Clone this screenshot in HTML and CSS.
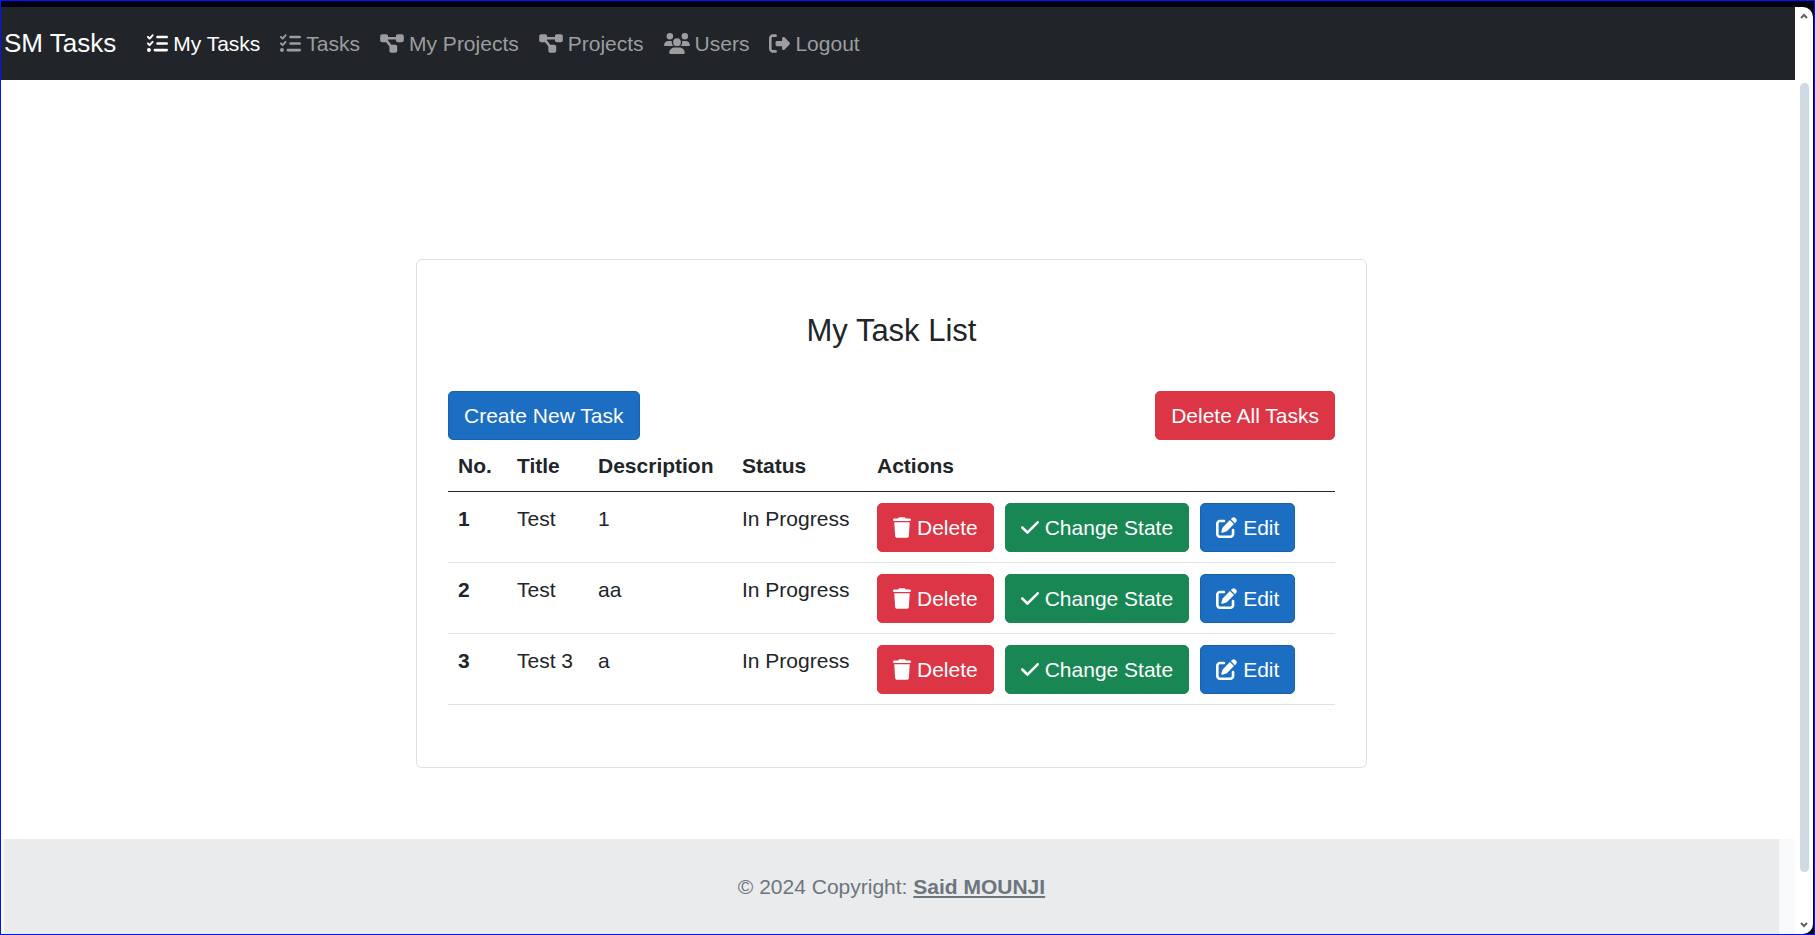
FILE: index.html
```html
<!DOCTYPE html>
<html lang="en">
<head>
<meta charset="utf-8">
<title>SM Tasks</title>
<link rel="stylesheet" href="styles.css">
</head>
<body>
<svg class="sprite" aria-hidden="true">
  <symbol id="list-check" viewBox="0 0 512 512"><path d="M152.1 38.2c9.9 8.9 10.7 24 1.8 33.9l-72 80c-4.4 4.9-10.6 7.8-17.2 7.9s-12.9-2.4-17.6-7L7 113C-2.3 103.6-2.3 88.4 7 79s24.6-9.4 33.9 0l22.1 22.1 55.1-61.2c8.9-9.9 24-10.7 33.9-1.8zm0 160c9.9 8.9 10.7 24 1.8 33.9l-72 80c-4.4 4.9-10.6 7.8-17.2 7.9s-12.9-2.4-17.6-7L7 273c-9.4-9.4-9.4-24.6 0-33.9s24.6-9.4 33.9 0l22.1 22.1 55.1-61.2c8.9-9.9 24-10.7 33.9-1.8zM224 96c0-17.7 14.3-32 32-32H480c17.7 0 32 14.3 32 32s-14.3 32-32 32H256c-17.7 0-32-14.3-32-32zm0 160c0-17.7 14.3-32 32-32H480c17.7 0 32 14.3 32 32s-14.3 32-32 32H256c-17.7 0-32-14.3-32-32zM160 416c0-17.7 14.3-32 32-32H480c17.7 0 32 14.3 32 32s-14.3 32-32 32H192c-17.7 0-32-14.3-32-32zM48 368a48 48 0 1 1 0 96 48 48 0 1 1 0-96z"/></symbol>
  <symbol id="diagram" viewBox="0 0 576 512"><path d="M0 80C0 53.5 21.5 32 48 32h96c26.5 0 48 21.5 48 48V96H384V80c0-26.5 21.5-48 48-48h96c26.5 0 48 21.5 48 48v96c0 26.5-21.5 48-48 48H432c-26.5 0-48-21.5-48-48V160H192v16c0 1.7-.1 3.4-.3 5L272 288h96c26.5 0 48 21.5 48 48v96c0 26.5-21.5 48-48 48H272c-26.5 0-48-21.5-48-48V336c0-1.7 .1-3.4 .3-5L144 224H48c-26.5 0-48-21.5-48-48V80z"/></symbol>
  <symbol id="users" viewBox="0 0 640 512"><path d="M144 0a80 80 0 1 1 0 160A80 80 0 1 1 144 0zM512 0a80 80 0 1 1 0 160A80 80 0 1 1 512 0zM0 298.7C0 239.8 47.8 192 106.7 192h42.7c15.9 0 31 3.5 44.6 9.7c-1.3 7.2-1.9 14.7-1.9 22.3c0 38.2 16.8 72.5 43.3 96c-.2 0-.4 0-.7 0H21.3C9.6 320 0 310.4 0 298.7zM405.3 320c-.2 0-.4 0-.7 0c26.6-23.5 43.3-57.8 43.3-96c0-7.6-.7-15-1.9-22.3c13.6-6.3 28.7-9.7 44.6-9.7h42.7C592.2 192 640 239.8 640 298.7c0 11.8-9.6 21.3-21.3 21.3H405.3zM224 224a96 96 0 1 1 192 0 96 96 0 1 1 -192 0zM128 485.3C128 411.7 187.7 352 261.3 352H378.7C452.3 352 512 411.7 512 485.3c0 14.7-11.9 26.7-26.7 26.7H154.7c-14.7 0-26.7-11.9-26.7-26.7z"/></symbol>
  <symbol id="logout" viewBox="0 0 512 512"><path d="M377.9 105.9L500.7 228.7c7.2 7.2 11.3 17.1 11.3 27.3s-4.1 20.1-11.3 27.3L377.9 406.1c-6.4 6.4-15 9.9-24 9.9c-18.7 0-33.9-15.2-33.9-33.9l0-62.1-128 0c-17.7 0-32-14.3-32-32l0-64c0-17.7 14.3-32 32-32l128 0 0-62.1c0-18.7 15.2-33.9 33.9-33.9c9 0 17.6 3.6 24 9.9zM160 96L96 96c-17.7 0-32 14.3-32 32l0 256c0 17.7 14.3 32 32 32l64 0c17.7 0 32 14.3 32 32s-14.3 32-32 32l-64 0c-53 0-96-43-96-96L0 128C0 75 43 32 96 32l64 0c17.7 0 32 14.3 32 32s-14.3 32-32 32z"/></symbol>
  <symbol id="trash" viewBox="0 0 448 512"><path d="M135.2 17.7L128 32H32C14.3 32 0 46.3 0 64S14.3 96 32 96H416c17.7 0 32-14.3 32-32s-14.3-32-32-32H320l-7.2-14.3C307.4 6.8 296.3 0 284.2 0H163.8c-12.1 0-23.2 6.8-28.6 17.7zM416 128H32L53.2 467c1.6 25.3 22.6 45 47.9 45H346.9c25.3 0 46.3-19.7 47.9-45L416 128z"/></symbol>
  <symbol id="check" viewBox="0 0 448 512"><path d="M438.6 105.4c12.5 12.5 12.5 32.8 0 45.3l-256 256c-12.5 12.5-32.8 12.5-45.3 0l-128-128c-12.5-12.5-12.5-32.8 0-45.3s32.8-12.5 45.3 0L160 338.7 393.4 105.4c12.5-12.5 32.8-12.5 45.3 0z"/></symbol>
  <symbol id="edit" viewBox="0 0 512 512"><path d="M471.6 21.7c-21.9-21.9-57.3-21.9-79.2 0L362.3 51.7l97.9 97.9 30.1-30.1c21.9-21.9 21.9-57.3 0-79.2L471.6 21.7zm-299.2 220c-6.1 6.1-10.8 13.6-13.5 21.9l-29.6 88.8c-2.9 8.6-.6 18.1 5.8 24.6s15.9 8.7 24.6 5.8l88.8-29.6c8.2-2.7 15.7-7.4 21.9-13.5L437.7 172.3 339.7 74.3 172.4 241.7zM96 64C43 64 0 107 0 160V416c0 53 43 96 96 96H352c53 0 96-43 96-96V320c0-17.7-14.3-32-32-32s-32 14.3-32 32v96c0 17.7-14.3 32-32 32H96c-17.7 0-32-14.3-32-32V160c0-17.7 14.3-32 32-32h96c17.7 0 32-14.3 32-32s-14.3-32-32-32H96z"/></symbol>
</svg>
<div class="window">
  <div class="page">
    <header class="navbar">
      <a class="brand" href="#">SM Tasks</a>
      <nav class="nav">
        <a class="nav-link active" href="#"><svg class="icon"><use href="#list-check"/></svg>My Tasks</a>
        <a class="nav-link" href="#"><svg class="icon"><use href="#list-check"/></svg>Tasks</a>
        <a class="nav-link" href="#"><svg class="icon icon-wide"><use href="#diagram"/></svg>My Projects</a>
        <a class="nav-link" href="#"><svg class="icon icon-wide"><use href="#diagram"/></svg>Projects</a>
        <a class="nav-link" href="#"><svg class="icon icon-wider"><use href="#users"/></svg>Users</a>
        <a class="nav-link" href="#"><svg class="icon"><use href="#logout"/></svg>Logout</a>
      </nav>
    </header>
    <main class="content">
      <section class="card">
        <h1 class="title">My Task List</h1>
        <div class="toolbar">
          <button class="btn primary" type="button">Create New Task</button>
          <button class="btn danger" type="button">Delete All Tasks</button>
        </div>
        <table class="tasks">
          <colgroup><col class="col-no"><col class="col-title"><col class="col-desc"><col class="col-status"><col></colgroup>
          <thead>
            <tr><th scope="col">No.</th><th scope="col">Title</th><th scope="col">Description</th><th scope="col">Status</th><th scope="col">Actions</th></tr>
          </thead>
          <tbody>
            <tr>
              <th scope="row">1</th><td>Test</td><td>1</td><td>In Progress</td>
              <td><div class="actions">
                <button class="btn danger" type="button"><svg class="icon icon-narrow"><use href="#trash"/></svg>Delete</button>
                <button class="btn success" type="button"><svg class="icon icon-narrow"><use href="#check"/></svg>Change State</button>
                <button class="btn primary" type="button"><svg class="icon"><use href="#edit"/></svg>Edit</button>
              </div></td>
            </tr>
            <tr>
              <th scope="row">2</th><td>Test</td><td>aa</td><td>In Progress</td>
              <td><div class="actions">
                <button class="btn danger" type="button"><svg class="icon icon-narrow"><use href="#trash"/></svg>Delete</button>
                <button class="btn success" type="button"><svg class="icon icon-narrow"><use href="#check"/></svg>Change State</button>
                <button class="btn primary" type="button"><svg class="icon"><use href="#edit"/></svg>Edit</button>
              </div></td>
            </tr>
            <tr>
              <th scope="row">3</th><td>Test 3</td><td>a</td><td>In Progress</td>
              <td><div class="actions">
                <button class="btn danger" type="button"><svg class="icon icon-narrow"><use href="#trash"/></svg>Delete</button>
                <button class="btn success" type="button"><svg class="icon icon-narrow"><use href="#check"/></svg>Change State</button>
                <button class="btn primary" type="button"><svg class="icon"><use href="#edit"/></svg>Edit</button>
              </div></td>
            </tr>
          </tbody>
        </table>
      </section>
    </main>
    <footer class="footer">
      <p class="copyright">© 2024 Copyright: <a class="author" href="#">Said MOUNJI</a></p>
    </footer>
  </div>
  <div class="scrollbar" aria-hidden="true">
    <svg class="arrow" viewBox="0 0 8 6"><path d="M1 5 4 2 7 5"/></svg>
    <div class="track"><div class="thumb"></div></div>
    <svg class="arrow" viewBox="0 0 8 6"><path d="M1 1 4 4 7 1"/></svg>
  </div>
</div>
</body>
</html>
```
FILE: styles.css
```css
* { box-sizing: border-box; }

body {
  margin: 0;
  font: 21px/31px "Liberation Sans", Arial, sans-serif;
  color: #212529;
  background: #fff;
}

.sprite { display: none; }

.window {
  display: flex;
  height: 100vh;
  overflow: hidden;
  border: 1px solid #0014ff;
  padding: 6px 1px 0 0;
  background: #00030f;
}

.page {
  flex: 1;
  min-width: 0;
  display: flex;
  flex-direction: column;
  overflow: hidden;
  background: #fff;
}

.navbar {
  display: flex;
  align-items: center;
  gap: 21px;
  flex: none;
  padding: 10px 3px;
  background: #212529;
}

.brand {
  padding: 11px 0;
  font-size: 26px;
  color: #fff;
  text-decoration: none;
}

.nav { display: flex; }

.nav-link {
  display: flex;
  align-items: center;
  gap: 5px;
  padding: 10px;
  color: #9b9d9f;
  text-decoration: none;
}

.nav-link.active { color: #fff; }

.icon {
  flex: none;
  width: 21px;
  height: 21px;
  fill: currentColor;
}

.icon-narrow { width: 18px; }
.icon-wide { width: 24px; }
.icon-wider { width: 26px; }

.content {
  flex: 1 0 auto;
  padding: 179px 16px 71px 3px;
}

.card {
  max-width: 951px;
  margin: 0 auto;
  padding: 52px 31px 62px;
  border: 1px solid #dee2e6;
  border-radius: 6px;
}

.title {
  margin: 0 0 42px;
  font-size: 31px;
  line-height: 37px;
  font-weight: 400;
  text-align: center;
}

.toolbar {
  display: flex;
  justify-content: space-between;
}

.btn {
  display: flex;
  align-items: center;
  gap: 6px;
  padding: 8px 15px;
  border: 1px solid;
  border-radius: 5px;
  font: inherit;
  color: #fff;
  white-space: nowrap;
}

.primary { background: #1b6ec2; border-color: #1861ac; }
.danger { background: #dc3545; border-color: #dc3545; }
.success { background: #198754; border-color: #198754; }

.tasks {
  width: 100%;
  table-layout: fixed;
  border-collapse: separate;
  border-spacing: 0;
}

.col-no { width: 59px; }
.col-title { width: 81px; }
.col-desc { width: 144px; }
.col-status { width: 135px; }

.tasks th,
.tasks td {
  padding: 11px 10px 10px;
  border-bottom: 1px solid #dee2e6;
  text-align: left;
  vertical-align: top;
  white-space: nowrap;
}

.tasks thead th {
  padding-top: 10px;
  border-bottom-color: #212529;
}

.actions {
  display: flex;
  gap: 11px;
}

.footer {
  flex: none;
  padding: 0 16px 0 3px;
  background: #f8f9fb;
}

.copyright {
  margin: 0;
  padding: 32px;
  background: #eaebed;
  color: #6c757d;
  text-align: center;
}

.author {
  color: inherit;
  font-weight: 700;
}

.scrollbar {
  display: flex;
  flex-direction: column;
  align-items: center;
  flex: none;
  width: 18px;
  padding: 6px 0;
  border-radius: 0 10px 10px 0;
  background: #fff;
}

.arrow {
  width: 8px;
  height: 6px;
  fill: none;
  stroke: #606060;
  stroke-width: 2;
}

.track {
  flex: 1;
  padding: 64px 0 50px;
}

.thumb {
  width: 9px;
  height: 100%;
  border-radius: 5px;
  background: #cfdae3;
}
```
